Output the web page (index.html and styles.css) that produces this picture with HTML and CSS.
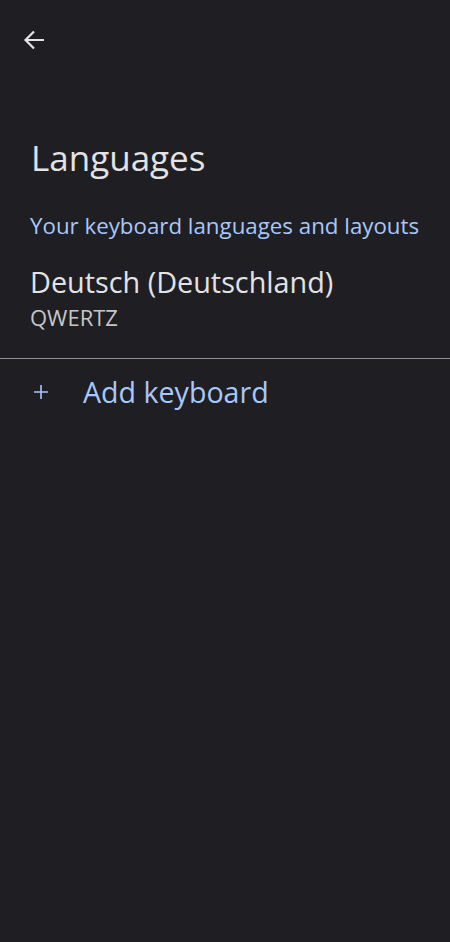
FILE: index.html
```html
<!DOCTYPE html>
<html lang="en">
<head>
    <meta charset="UTF-8">
    <meta name="viewport" content="width=device-width, initial-scale=1.0">
    <title>Languages</title>
    <link rel="stylesheet" href="styles.css">
</head>
<body>

    <!-- Top bar -->
    <div class="top-bar">
        <button class="back-btn" aria-label="Back">
            <svg width="24" height="24" viewBox="0 0 24 24">
                <path d="M22 12H3.5M12 3.5L3.5 12L12 20.5" fill="none" stroke="#e3e3e3" stroke-width="2.2"/>
            </svg>
        </button>
    </div>

    <h1 class="page-title">Languages</h1>

    <!-- Keyboard list -->
    <div class="section-title">Your keyboard languages and layouts</div>
    <div class="keyboard-item">
        <div class="keyboard-name">Deutsch (Deutschland)</div>
        <div class="keyboard-layout">QWERTZ</div>
    </div>

    <div class="divider"></div>

    <div class="add-row">
        <span class="add-icon">
            <svg width="16" height="16" viewBox="0 0 16 16">
                <path d="M8 1V15M1 8H15" stroke="#a8c7fa" stroke-width="1.6"/>
            </svg>
        </span>
        <span class="add-text">Add keyboard</span>
    </div>

</body>
</html>
```

FILE: styles.css
```css
/* Page */
html, body {
    height: 100%;
}

body {
    margin: 0;
    background-color: #1f1f23;
    color: #e3e3e3;
    font-family: "Open Sans", Roboto, sans-serif;
}

/* Top bar */
.top-bar {
    height: 80px;
    padding: 28px 0 0 22px;
    box-sizing: border-box;
}

.back-btn {
    background: none;
    border: none;
    padding: 0;
    width: 24px;
    height: 24px;
    cursor: pointer;
}

/* Title */
.page-title {
    margin: 0;
    padding: 54px 31px 0;
    font-size: 35px;
    font-weight: 400;
    line-height: 48px;
}

/* Section */
.section-title {
    padding: 30px 30px 0;
    font-size: 22.3px;
    line-height: 28px;
    color: #a8c7fa;
}

.keyboard-item {
    padding: 24px 30px 0;
}

.keyboard-name {
    font-size: 28.8px;
    line-height: 36px;
}

.keyboard-layout {
    margin-top: 2px;
    font-size: 22px;
    line-height: 30px;
    color: #c4c7c5;
}

.divider {
    height: 1px;
    margin-top: 26px;
    background-color: #8e9099;
}

/* Add keyboard row */
.add-row {
    display: flex;
    align-items: center;
    padding: 15px 31px 0 33px;
    color: #a8c7fa;
}

.add-icon {
    display: flex;
    width: 50px;
}

.add-text {
    font-size: 28.6px;
    line-height: 36px;
}
```
